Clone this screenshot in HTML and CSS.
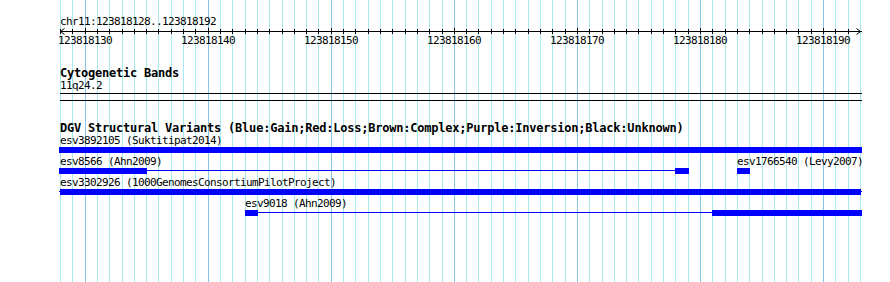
FILE: index.html
```html
<!DOCTYPE html>
<html>
<head>
<meta charset="utf-8">
<link rel="stylesheet" href="styles.css">
</head>
<body>
<div class="panel">
  <svg class="grid" width="890" height="282">
    <g class="minor">
      <rect x="60" y="0" width="1" height="282"/><rect x="72" y="0" width="1" height="282"/>
      <rect x="97" y="0" width="1" height="282"/><rect x="109" y="0" width="1" height="282"/><rect x="122" y="0" width="1" height="282"/><rect x="134" y="0" width="1" height="282"/><rect x="146" y="0" width="1" height="282"/><rect x="158" y="0" width="1" height="282"/><rect x="171" y="0" width="1" height="282"/><rect x="183" y="0" width="1" height="282"/><rect x="195" y="0" width="1" height="282"/>
      <rect x="220" y="0" width="1" height="282"/><rect x="232" y="0" width="1" height="282"/><rect x="245" y="0" width="1" height="282"/><rect x="257" y="0" width="1" height="282"/><rect x="269" y="0" width="1" height="282"/><rect x="282" y="0" width="1" height="282"/><rect x="294" y="0" width="1" height="282"/><rect x="306" y="0" width="1" height="282"/><rect x="318" y="0" width="1" height="282"/>
      <rect x="343" y="0" width="1" height="282"/><rect x="355" y="0" width="1" height="282"/><rect x="368" y="0" width="1" height="282"/><rect x="380" y="0" width="1" height="282"/><rect x="392" y="0" width="1" height="282"/><rect x="405" y="0" width="1" height="282"/><rect x="417" y="0" width="1" height="282"/><rect x="429" y="0" width="1" height="282"/><rect x="442" y="0" width="1" height="282"/>
      <rect x="466" y="0" width="1" height="282"/><rect x="478" y="0" width="1" height="282"/><rect x="491" y="0" width="1" height="282"/><rect x="503" y="0" width="1" height="282"/><rect x="515" y="0" width="1" height="282"/><rect x="528" y="0" width="1" height="282"/><rect x="540" y="0" width="1" height="282"/><rect x="552" y="0" width="1" height="282"/><rect x="565" y="0" width="1" height="282"/>
      <rect x="589" y="0" width="1" height="282"/><rect x="602" y="0" width="1" height="282"/><rect x="614" y="0" width="1" height="282"/><rect x="626" y="0" width="1" height="282"/><rect x="638" y="0" width="1" height="282"/><rect x="651" y="0" width="1" height="282"/><rect x="663" y="0" width="1" height="282"/><rect x="675" y="0" width="1" height="282"/><rect x="688" y="0" width="1" height="282"/>
      <rect x="712" y="0" width="1" height="282"/><rect x="725" y="0" width="1" height="282"/><rect x="737" y="0" width="1" height="282"/><rect x="749" y="0" width="1" height="282"/><rect x="762" y="0" width="1" height="282"/><rect x="774" y="0" width="1" height="282"/><rect x="786" y="0" width="1" height="282"/><rect x="798" y="0" width="1" height="282"/><rect x="811" y="0" width="1" height="282"/>
      <rect x="835" y="0" width="1" height="282"/><rect x="848" y="0" width="1" height="282"/><rect x="860" y="0" width="1" height="282"/>
    </g>
    <g class="major">
      <rect x="85" y="0" width="1" height="282"/><rect x="208" y="0" width="1" height="282"/><rect x="331" y="0" width="1" height="282"/><rect x="454" y="0" width="1" height="282"/><rect x="577" y="0" width="1" height="282"/><rect x="700" y="0" width="1" height="282"/><rect x="823" y="0" width="1" height="282"/>
    </g>
  </svg>

  <div class="content">
    <svg class="ruler" width="890" height="48">
      <text class="rt" x="60" y="25">chr11:123818128..123818192</text>
      <rect class="axis" x="60" y="31" width="802" height="1"/>
      <path class="ticks" d="M60.5 29V34M72.5 29V34M85.5 28V34M97.5 29V34M109.5 29V34M122.5 29V34M134.5 29V34M146.5 29V34M158.5 29V34M171.5 29V34M183.5 29V34M195.5 29V34M208.5 28V34M220.5 29V34M232.5 29V34M245.5 29V34M257.5 29V34M269.5 29V34M282.5 29V34M294.5 29V34M306.5 29V34M318.5 29V34M331.5 28V34M343.5 29V34M355.5 29V34M368.5 29V34M380.5 29V34M392.5 29V34M405.5 29V34M417.5 29V34M429.5 29V34M442.5 29V34M454.5 28V34M466.5 29V34M478.5 29V34M491.5 29V34M503.5 29V34M515.5 29V34M528.5 29V34M540.5 29V34M552.5 29V34M565.5 29V34M577.5 28V34M589.5 29V34M602.5 29V34M614.5 29V34M626.5 29V34M638.5 29V34M651.5 29V34M663.5 29V34M675.5 29V34M688.5 29V34M700.5 28V34M712.5 29V34M725.5 29V34M737.5 29V34M749.5 29V34M762.5 29V34M774.5 29V34M786.5 29V34M798.5 29V34M811.5 29V34M823.5 28V34M835.5 29V34M848.5 29V34"/>
      <path class="arrow" d="M64.5 28.5L60.5 31.5L64.5 34.5M856.5 28.5L860.5 31.5L856.5 34.5"/>
      <text class="rt mid" x="85" y="44">123818130</text>
      <text class="rt mid" x="208" y="44">123818140</text>
      <text class="rt mid" x="331" y="44">123818150</text>
      <text class="rt mid" x="454" y="44">123818160</text>
      <text class="rt mid" x="577" y="44">123818170</text>
      <text class="rt mid" x="700" y="44">123818180</text>
      <text class="rt mid" x="823" y="44">123818190</text>
    </svg>

    <section class="track cyto">
      <div class="track-title">Cytogenetic Bands</div>
      <div class="band-label">11q24.2</div>
      <div class="band"></div>
    </section>

    <section class="track dgv">
      <div class="track-title">DGV Structural Variants (Blue:Gain;Red:Loss;Brown:Complex;Purple:Inversion;Black:Unknown)</div>
      <div class="row">
        <span class="label" style="left:60px">esv3892105 (Suktitipat2014)</span>
        <span class="seg thick" style="left:59px;width:803px"></span>
      </div>
      <div class="row">
        <span class="label" style="left:60px">esv8566 (Ahn2009)</span>
        <span class="seg thin" style="left:59px;width:630px"></span>
        <span class="seg thick" style="left:59px;width:88px"></span>
        <span class="seg thick" style="left:675px;width:14px"></span>
        <span class="label" style="left:737px">esv1766540 (Levy2007)</span>
        <span class="seg thick" style="left:737px;width:13px"></span>
      </div>
      <div class="row">
        <span class="label" style="left:60px">esv3302926 (1000GenomesConsortiumPilotProject)</span>
        <span class="seg thin" style="left:59px;width:803px"></span>
        <span class="seg thick" style="left:60px;width:801px"></span>
      </div>
      <div class="row">
        <span class="label" style="left:245px">esv9018 (Ahn2009)</span>
        <span class="seg thin" style="left:245px;width:617px"></span>
        <span class="seg thick" style="left:245px;width:13px"></span>
        <span class="seg thick" style="left:712px;width:150px"></span>
      </div>
    </section>
  </div>
</div>
</body>
</html>
```

FILE: styles.css
```css
html, body {
  margin: 0;
  padding: 0;
  background: #ffffff;
}

.panel {
  position: relative;
  width: 890px;
  height: 282px;
  overflow: hidden;
  background: #ffffff;
  color: #000000;
}

.grid {
  position: absolute;
  left: 0;
  top: 0;
  display: block;
}

.grid .minor {
  fill: #a8e8f0;
}

.grid .major {
  fill: #88c4e8;
}

.content {
  position: relative;
}

.ruler {
  display: block;
}

.rt {
  font-family: "DejaVu Sans Mono", monospace;
  font-size: 11px;
  letter-spacing: -0.62px;
  fill: #000000;
}

.rt.mid {
  text-anchor: middle;
}

.axis {
  fill: #000000;
}

.ticks,
.arrow {
  fill: none;
  stroke: #000000;
  stroke-width: 1;
}

.track-title {
  font-family: "DejaVu Sans Mono", monospace;
  font-weight: bold;
  font-size: 12px;
  letter-spacing: -0.22px;
  line-height: 13px;
  height: 13px;
  padding-left: 60px;
  white-space: nowrap;
}

.cyto .track-title {
  margin-top: 19px;
}

.band-label {
  font-family: "DejaVu Sans Mono", monospace;
  font-size: 11px;
  letter-spacing: -0.62px;
  line-height: 12px;
  height: 12px;
  padding-left: 60px;
  white-space: nowrap;
}

.band {
  margin: 1px 0 0 60px;
  width: 802px;
  height: 6px;
  border-top: 1px solid #000000;
  border-bottom: 1px solid #000000;
}

.dgv .track-title {
  margin-top: 20px;
  line-height: 14px;
  height: 14px;
}

.row {
  position: relative;
  height: 21px;
}

.label {
  position: absolute;
  top: 0;
  font-family: "DejaVu Sans Mono", monospace;
  font-size: 11px;
  letter-spacing: -0.62px;
  line-height: 12px;
  height: 12px;
  white-space: nowrap;
}

.seg {
  position: absolute;
  background: #0000ff;
}

.seg.thick {
  top: 12px;
  height: 6px;
}

.seg.thin {
  top: 14px;
  height: 1px;
}
```
